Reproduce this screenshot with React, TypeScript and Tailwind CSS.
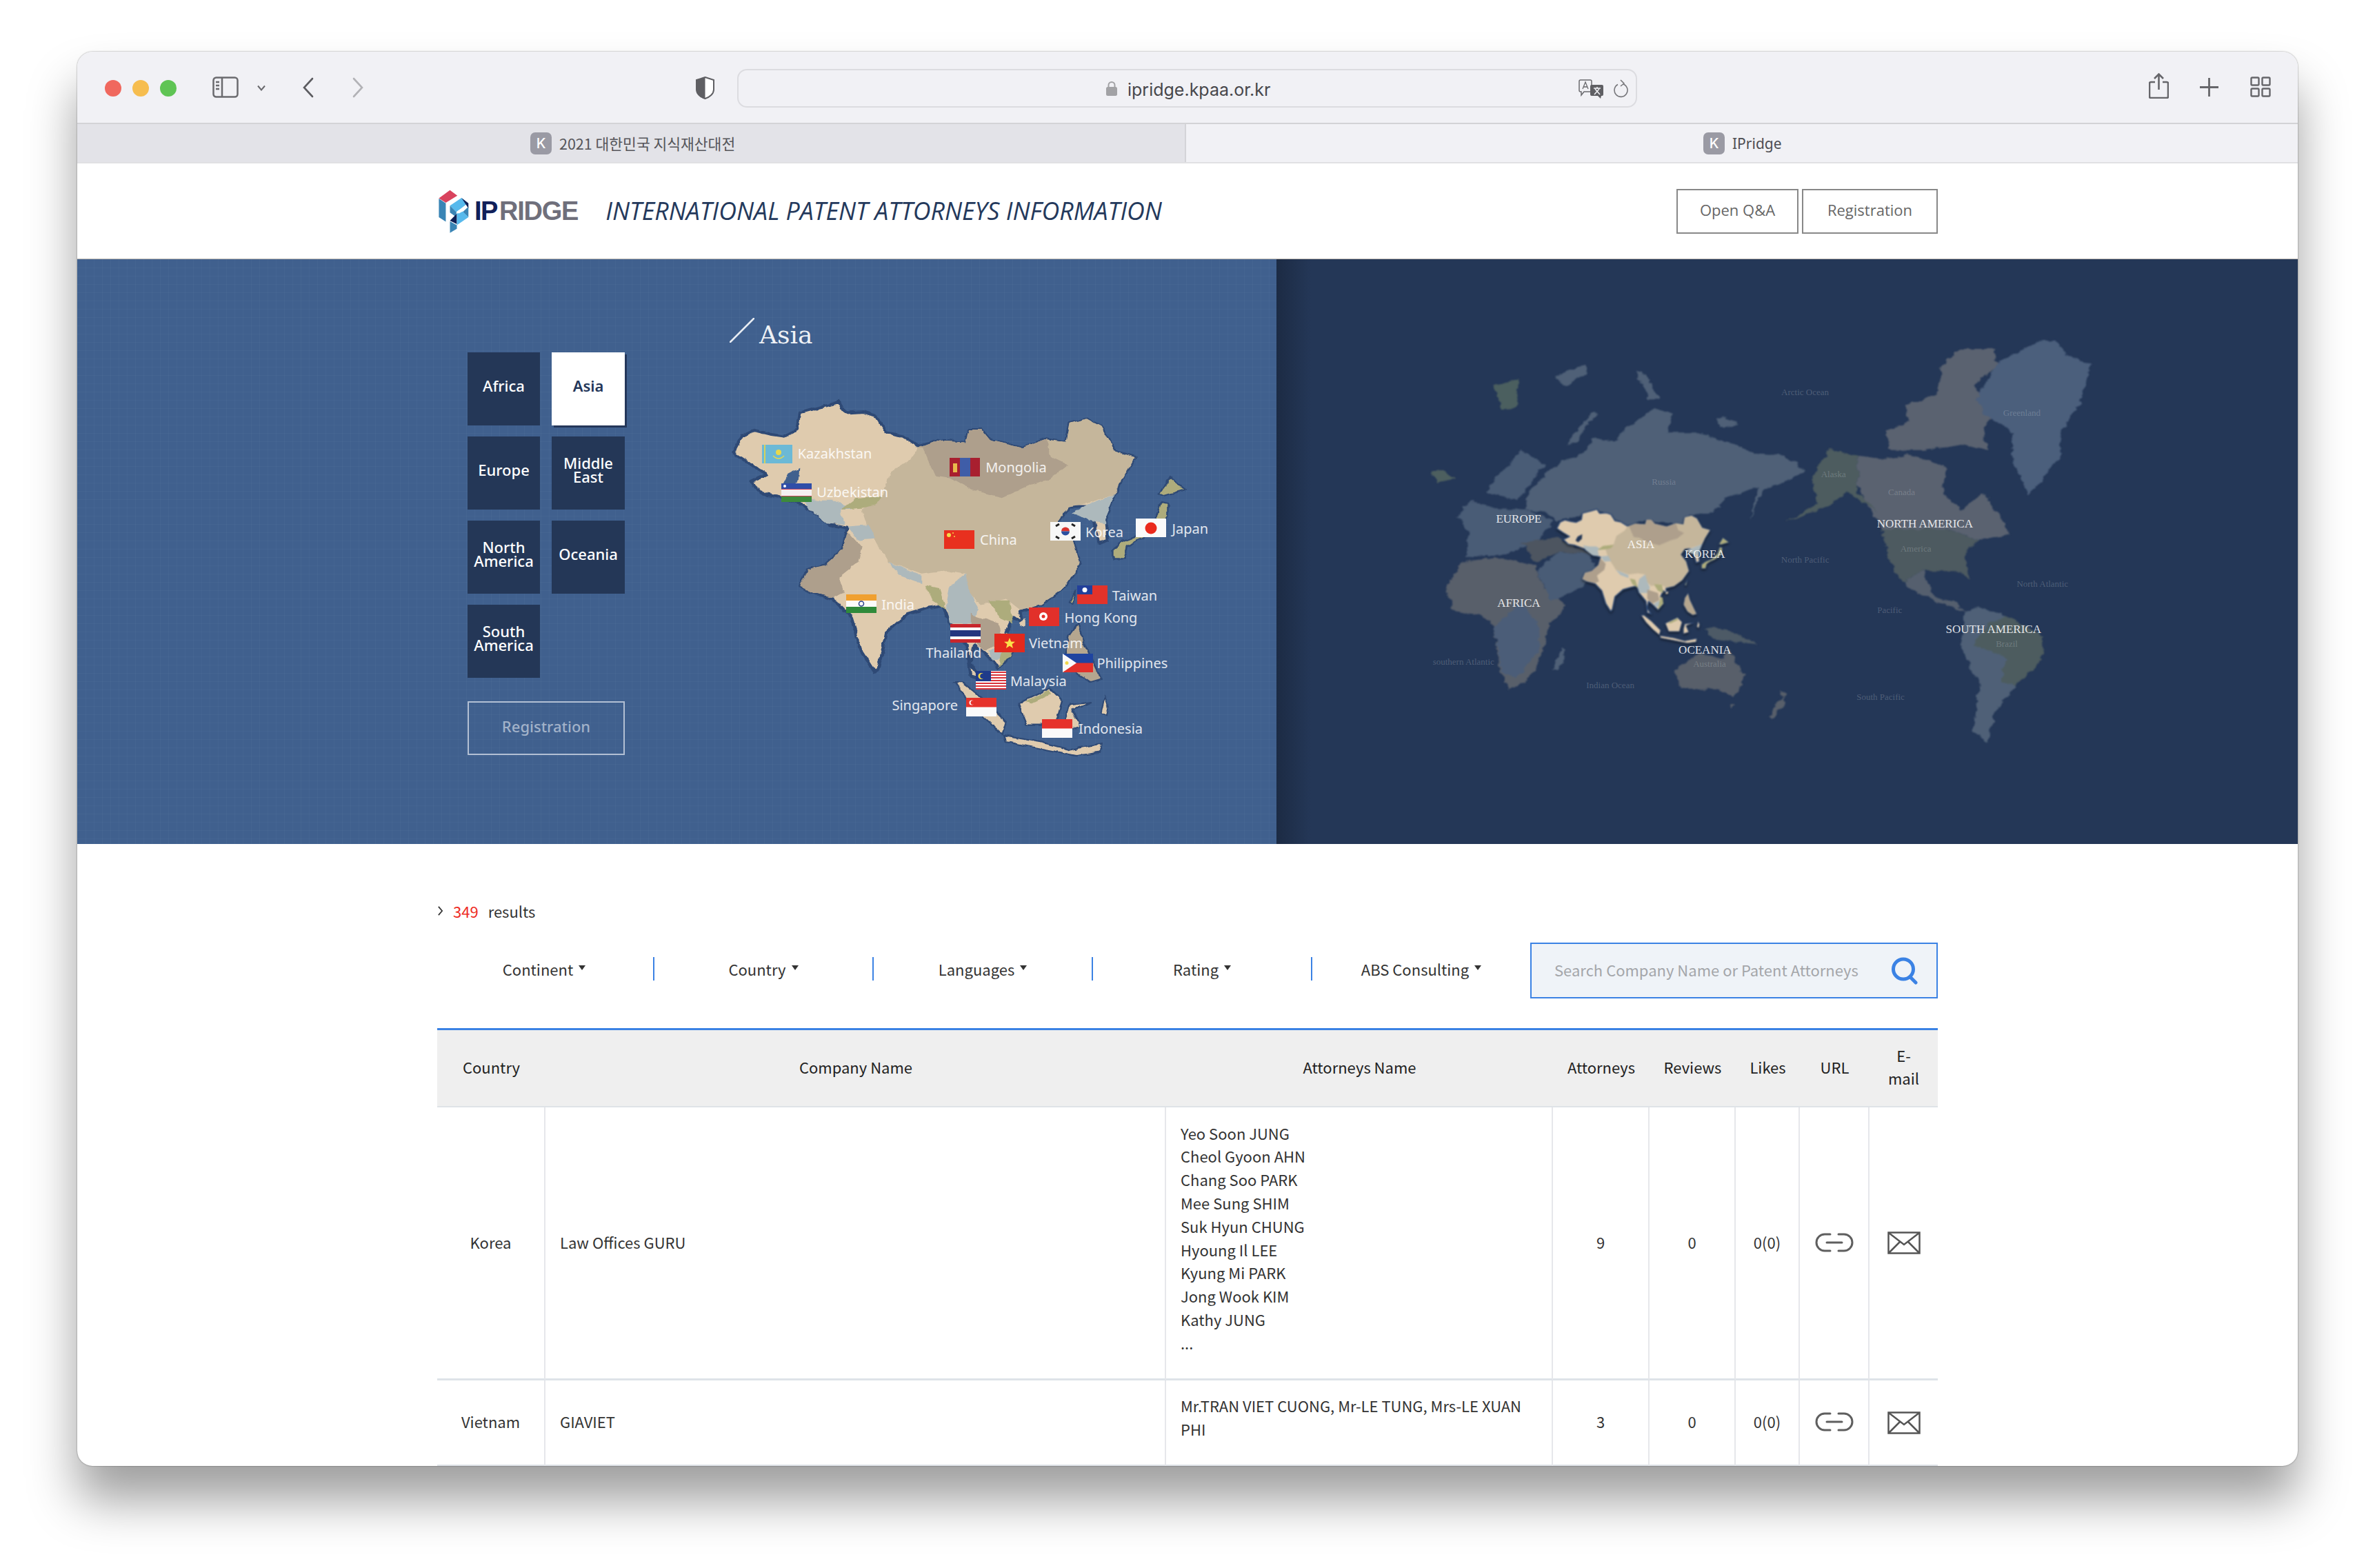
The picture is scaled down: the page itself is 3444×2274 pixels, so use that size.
import React from "react";

const kr = "font-['Noto_Sans_CJK_KR',sans-serif]";

const regions = [
  { name: "Africa" },
  { name: "Asia", active: true },
  { name: "Europe" },
  { name: "Middle East" },
  { name: "North America" },
  { name: "Oceania" },
  { name: "South America" },
];

const names = [
  "Yeo Soon JUNG",
  "Cheol Gyoon AHN",
  "Chang Soo PARK",
  "Mee Sung SHIM",
  "Suk Hyun CHUNG",
  "Hyoung Il LEE",
  "Kyung Mi PARK",
  "Jong Wook KIM",
  "Kathy JUNG",
  "...",
];

// positions below are in the coordinate space of the map svg (1568 x 1568 stretched to 800 x 700)
const pins = [
  { flag: "kz", fx: 166, fy: 479, label: "Kazakhstan", lx: 268, ly: 508 },
  { flag: "uz", fx: 222, fy: 605, label: "Uzbekistan", lx: 322, ly: 634 },
  { flag: "mn", fx: 699, fy: 521, label: "Mongolia", lx: 802, ly: 553 },
  { flag: "cn", fx: 685, fy: 757, label: "China", lx: 786, ly: 789 },
  { flag: "kr", fx: 986, fy: 731, label: "Korea", lx: 1086, ly: 763 },
  { flag: "jp", fx: 1229, fy: 719, label: "Japan", lx: 1332, ly: 752 },
  { flag: "tw", fx: 1062, fy: 937, label: "Taiwan", lx: 1162, ly: 969 },
  { flag: "hk", fx: 926, fy: 1008, label: "Hong Kong", lx: 1026, ly: 1041 },
  { flag: "in", fx: 405, fy: 966, label: "India", lx: 506, ly: 998 },
  { flag: "th", fx: 702, fy: 1061, label: "Thailand", lx: 632, ly: 1155 },
  { flag: "vn", fx: 828, fy: 1092, label: "Vietnam", lx: 925, ly: 1124 },
  { flag: "ph", fx: 1022, fy: 1158, label: "Philippines", lx: 1118, ly: 1189 },
  { flag: "my", fx: 775, fy: 1214, label: "Malaysia", lx: 872, ly: 1247 },
  { flag: "sg", fx: 746, fy: 1301, label: "Singapore", lx: 536, ly: 1327 },
  { flag: "id", fx: 962, fy: 1370, label: "Indonesia", lx: 1066, ly: 1403 },
];

const worldLabels = [
  { t: "EUROPE", x: 245, y: 715, big: true },
  { t: "ASIA", x: 512, y: 805, big: true },
  { t: "KOREA", x: 652, y: 840, big: true },
  { t: "AFRICA", x: 245, y: 1015, big: true },
  { t: "NORTH AMERICA", x: 1133, y: 732, big: true },
  { t: "SOUTH AMERICA", x: 1283, y: 1107, big: true },
  { t: "OCEANIA", x: 652, y: 1180, big: true },
  { t: "Arctic Ocean", x: 871, y: 264 },
  { t: "North Pacific", x: 871, y: 861 },
  { t: "North Atlantic", x: 1390, y: 945 },
  { t: "Pacific", x: 1056, y: 1039 },
  { t: "southern Atlantic", x: 124, y: 1222 },
  { t: "Indian Ocean", x: 445, y: 1307 },
  { t: "South Pacific", x: 1036, y: 1348 },
  { t: "Greenland", x: 1345, y: 338 },
  { t: "Russia", x: 562, y: 582 },
  { t: "Canada", x: 1082, y: 620 },
  { t: "Alaska", x: 933, y: 555 },
  { t: "America", x: 1113, y: 820 },
  { t: "Brazil", x: 1312, y: 1160 },
  { t: "Australia", x: 662, y: 1230 },
];

function Flag({ kind }: { kind: string }) {
  const bands = (a: string, b: string, c: string) => (
    <>
      <rect width="44" height="9" fill={a} />
      <rect y="9" width="44" height="9" fill={b} />
      <rect y="18" width="44" height="9" fill={c} />
    </>
  );
  return (
    <svg viewBox="0 0 44 27" className="w-[44px] h-[27px] block">
      {kind === "kz" && (
        <>
          <rect width="44" height="27" fill="#6cb9d6" />
          <rect x="3" width="2" height="27" fill="#d8d25a" />
          <circle cx="24" cy="11" r="4" fill="#e8d84c" />
          <path d="M16 16 Q24 24 32 16" stroke="#e8d84c" strokeWidth="1.5" fill="none" />
        </>
      )}
      {kind === "uz" && (
        <>
          {bands("#2f4ea8", "#f4f0f0", "#3d8a3c")}
          <rect y="8" width="44" height="1" fill="#c9425a" />
          <rect y="18" width="44" height="1" fill="#c9425a" />
          <circle cx="5" cy="4" r="2" fill="#fff" />
        </>
      )}
      {kind === "mn" && (
        <>
          <rect width="44" height="27" fill="#a81f2f" />
          <rect x="15" width="15" height="27" fill="#3f5da8" />
          <rect x="5" y="8" width="6" height="13" fill="#e8b94c" />
        </>
      )}
      {kind === "cn" && (
        <>
          <rect width="44" height="27" fill="#e8301f" />
          <circle cx="7" cy="7" r="3" fill="#f5d94a" />
          <circle cx="13" cy="4" r="1" fill="#f5d94a" />
          <circle cx="15" cy="9" r="1" fill="#f5d94a" />
        </>
      )}
      {kind === "kr" && (
        <>
          <rect width="44" height="27" fill="#f7f7f7" />
          <path d="M16 13.5 a6 6 0 0 1 12 0z" fill="#d8332e" />
          <path d="M16 13.5 a6 6 0 0 0 12 0z" fill="#2a4fa0" />
          <path d="M8 6 L13 3 M31 3 L36 6 M8 21 L13 24 M31 24 L36 21" stroke="#222" strokeWidth="3" />
        </>
      )}
      {kind === "jp" && (
        <>
          <rect width="44" height="27" fill="#fafafa" />
          <circle cx="22" cy="14" r="8.5" fill="#ea2a1d" />
        </>
      )}
      {kind === "tw" && (
        <>
          <rect width="44" height="27" fill="#e2332a" />
          <rect width="22" height="13" fill="#22409a" />
          <circle cx="11" cy="6.5" r="3.5" fill="#fff" />
        </>
      )}
      {kind === "hk" && (
        <>
          <rect width="44" height="27" fill="#e2302a" />
          <circle cx="21" cy="13" r="6" fill="#fff" />
          <circle cx="21" cy="13" r="2.5" fill="#e2302a" />
        </>
      )}
      {kind === "in" && (
        <>
          {bands("#f0a030", "#fbfbfb", "#2f8a3a")}
          <circle cx="22" cy="13.5" r="3.5" fill="none" stroke="#2a3f88" strokeWidth="1.5" />
        </>
      )}
      {kind === "th" && (
        <>
          <rect width="44" height="27" fill="#c8262c" />
          <rect y="5" width="44" height="17" fill="#fafafa" />
          <rect y="9" width="44" height="9" fill="#24357f" />
        </>
      )}
      {kind === "vn" && (
        <>
          <rect width="44" height="27" fill="#e3291d" />
          <polygon points="22,6 24.2,11.5 30,11.8 25.5,15.3 27,21 22,17.8 17,21 18.5,15.3 14,11.8 19.8,11.5" fill="#fbe14a" />
        </>
      )}
      {kind === "ph" && (
        <>
          <rect width="44" height="14" fill="#1f44a0" />
          <rect y="13.5" width="44" height="13.5" fill="#e2302a" />
          <polygon points="0,0 20,13.5 0,27" fill="#fafafa" />
          <circle cx="6" cy="13.5" r="2.5" fill="#f2d84a" />
        </>
      )}
      {kind === "my" && (
        <>
          <rect width="44" height="27" fill="#fff" />
          <path d="M0 2H44M0 6H44M0 10H44M0 14H44M0 18H44M0 22H44M0 26H44" stroke="#d9333a" strokeWidth="2" />
          <rect width="22" height="15" fill="#1f3b8a" />
          <circle cx="8" cy="7.5" r="4.5" fill="#f2d84a" />
          <circle cx="10" cy="7.5" r="3.8" fill="#1f3b8a" />
        </>
      )}
      {kind === "sg" && (
        <>
          <rect width="44" height="27" fill="#fafafa" />
          <rect width="44" height="13.5" fill="#e6322b" />
          <circle cx="8" cy="7" r="3.5" fill="#fff" />
          <circle cx="9.5" cy="7" r="3" fill="#e6322b" />
        </>
      )}
      {kind === "id" && (
        <>
          <rect width="44" height="27" fill="#fafafa" />
          <rect width="44" height="13.5" fill="#e6322b" />
        </>
      )}
    </svg>
  );
}

// coastline wobble, the hand polygons are too straight without it
function Rough({ id, freq, scale }: { id: string; freq: string; scale: string }) {
  return (
    <filter id={id} x="-5%" y="-5%" width="110%" height="110%">
      <feTurbulence type="fractalNoise" baseFrequency={freq} numOctaves="3" seed="4" result="n" />
      <feDisplacementMap in="SourceGraphic" in2="n" scale={scale} xChannelSelector="R" yChannelSelector="G" />
    </filter>
  );
}

// drawn once, used for the big map and again inside the world map
function AsiaShapes({ water }: { water: string }) {
  const outline =
    "85,505 110,450 145,432 190,445 230,452 268,430 275,375 340,355 385,340 405,375 455,372 490,385 520,440 565,450 612,485 670,465 745,470 755,430 790,430 815,465 905,490 975,460 1030,470 1040,410 1090,395 1130,420 1170,500 1228,520 1190,590 1170,640 1145,710 1150,790 1125,800 1110,730 1090,680 1040,680 1010,730 1050,790 1070,870 1020,950 960,1000 900,1020 905,1060 880,1040 860,1090 880,1150 840,1205 815,1175 790,1150 770,1130 760,1190 790,1240 760,1230 750,1130 700,1060 680,1000 640,1010 580,1030 520,1090 500,1200 488,1218 450,1150 420,1040 370,980 310,960 275,940 295,885 345,870 395,820 410,750 360,740 290,680 220,650 170,640 135,600 180,575 130,540";
  return (
    <>
      <polygon points={outline} fill="#dfcbae" stroke="#2f4a75" strokeWidth="9" strokeLinejoin="round" />
      <polygon points="612,490 590,525 530,570 510,640 450,690 470,760 510,830 525,860 620,900 690,890 745,900 755,960 790,1000 860,980 900,1015 960,1000 1020,950 1070,870 1050,790 1010,730 1040,680 1090,670 1170,640 1190,590 1228,520 1170,500 1130,420 1090,395 1040,410 1030,470 975,460 905,490 815,465 790,430 755,430 745,470 670,465" fill="#c5b69b" />
      <polygon points="612,490 670,465 745,470 755,430 790,430 815,465 905,490 975,460 990,520 1035,545 985,590 930,610 850,650 760,625 700,585 660,580 625,490" fill="#ae9f8c" />
      <polygon points="410,760 450,810 440,860 385,910 400,960 370,975 310,960 275,940 295,885 345,870 395,820" fill="#ae9f8c" />
      <polygon points="280,650 330,660 380,660 420,690 390,690 400,740 350,735 300,690" fill="#adb9bc" />
      <polygon points="410,745 470,740 490,785 440,790" fill="#adb9bc" />
      <polygon points="390,690 430,655 510,645 490,675 450,685" fill="#adac7c" />
      <polygon points="525,860 620,905 620,930 560,905" fill="#adb9bc" />
      <polygon points="630,935 670,945 690,1015 650,985" fill="#adac7c" />
      <polygon points="690,1000 700,940 745,900 760,960 780,1010 770,1060 700,1060" fill="#adb9bc" />
      <polygon points="810,985 870,985 880,1060 840,1040" fill="#adac7c" />
      <polygon points="760,1030 840,1060 850,1120 800,1150 760,1110" fill="#ae9f8c" />
      <polygon points="810,1150 850,1125 860,1170 820,1180" fill="#adb9bc" />
      <polygon points="840,1205 880,1150 875,1100 860,1090 845,1170" fill="#adac7c" />
      <polygon points="1045,700 1100,670 1170,640 1145,710 1145,735 1110,730" fill="#adb9bc" />
      <polygon points="240,575 275,555 272,595 245,625 225,610" fill={water} />
      <polygon points="1295,640 1325,585 1370,625 1310,645" fill="#aeac7b" stroke="#2f4a75" strokeWidth="5" />
      <polygon points="1300,665 1320,670 1320,710 1300,745 1260,775 1230,790 1205,810 1195,850 1165,850 1165,815 1195,790 1240,770 1285,720" fill="#aeac7b" stroke="#2f4a75" strokeWidth="5" />
      <polygon points="1040,990 1060,950 1050,995" fill="#aeac7b" stroke="#2f4a75" strokeWidth="4" />
      <polygon points="1040,1100 1065,1060 1080,1120 1130,1240 1100,1250 1060,1220 1030,1160" fill="#b5a68f" stroke="#2f4a75" strokeWidth="5" />
      <polygon points="715,1250 735,1250 790,1300 860,1380 850,1420 800,1370 750,1310" fill="#dfcbae" stroke="#2f4a75" strokeWidth="5" />
      <polygon points="895,1320 985,1270 1020,1310 1000,1390 920,1390" fill="#dfcbae" stroke="#2f4a75" strokeWidth="5" />
      <polygon points="915,1315 985,1275 990,1290 935,1320" fill="#adac7c" />
      <polygon points="1030,1370 1040,1325 1105,1315 1050,1340 1070,1395 1030,1410" fill="#dfcbae" stroke="#2f4a75" strokeWidth="5" />
      <polygon points="1130,1350 1140,1300 1150,1330 1145,1360" fill="#dfcbae" stroke="#2f4a75" strokeWidth="4" />
      <polygon points="855,1425 960,1445 1040,1470 1130,1450 1125,1480 1060,1490 950,1465 860,1445" fill="#dfcbae" stroke="#2f4a75" strokeWidth="5" />
      <polygon points="895,1060 915,1045 915,1065 900,1068" fill="#dfcbae" />
    </>
  );
}

function AsiaMap() {
  return (
    <div className="absolute left-[908px] top-[55px] w-[800px] h-[700px]">
      <svg viewBox="0 0 1568 1568" preserveAspectRatio="none" className="absolute inset-0 w-full h-full">
        <defs>
          <Rough id="roughAsia" freq="0.035" scale="13" />
        </defs>
        <g filter="url(#roughAsia)">
          <AsiaShapes water="#40608e" />
        </g>
      </svg>
      {pins.map((p) => (
        <React.Fragment key={p.flag}>
          <div className="absolute" style={{ left: p.fx / 1.96, top: p.fy / 2.24 }}>
            <Flag kind={p.flag} />
          </div>
          <span
            className="absolute font-['Noto_Sans',sans-serif] text-[20px] leading-[28px] text-white/85 whitespace-nowrap"
            style={{ left: p.lx / 1.96, top: p.ly / 2.24 - 14 }}
          >
            {p.label}
          </span>
        </React.Fragment>
      ))}
    </div>
  );
}

function WorldMap() {
  return (
    <div className="absolute left-[189px] top-[85px] w-[1040px] h-[640px]">
      <svg viewBox="0 0 1568 1568" preserveAspectRatio="none" className="absolute inset-0 w-full h-full blur-[0.8px]">
        <defs>
          <Rough id="roughWorld" freq="0.045" scale="18" />
        </defs>
        <g filter="url(#roughWorld)">
          <polygon points="260,640 300,560 340,510 385,480 410,430 450,440 470,410 540,320 580,340 570,410 640,410 700,440 760,480 830,490 870,540 840,575 780,610 750,720 770,600 700,640 670,690 620,700 600,730 520,720 480,740 440,700 410,680 385,700 330,720 300,690 260,680" fill="#4f6177" />
          <polygon points="350,450 410,330 415,340 370,440" fill="#4f6177" />
          <polygon points="500,190 525,200 550,290 530,290" fill="#4f6177" />
          <polygon points="320,210 390,165 395,200 350,240" fill="#4f6177" />
          <polygon points="672,360 700,350 725,385 690,390" fill="#4f6177" />
          <polygon points="170,620 250,465 300,520 270,590 240,650 215,640" fill="#4a5c76" />
          <polygon points="110,710 140,650 200,680 260,680 320,720 290,790 220,840 130,850 135,760" fill="#4a5c76" />
          <polygon points="55,550 75,540 105,570 70,585" fill="#4d5f5f" />
          <polygon points="190,240 245,215 240,310 210,330" fill="#4c5f5e" />
          <polygon points="85,960 120,870 190,850 280,880 300,960 350,1020 310,1090 300,1180 270,1280 225,1320 205,1260 190,1100 165,1060 100,1040" fill="#585f6b" />
          <polygon points="190,1100 250,1010 290,1100 290,1180 240,1280 210,1260" fill="#4b5d78" />
          <polygon points="320,1250 340,1170 345,1200 330,1255" fill="#4f6177" />
          <polygon points="285,900 330,830 400,840 415,900 380,960 315,1010" fill="#4a5c76" />
          <polygon points="250,800 330,780 400,840 330,830 285,870" fill="#4d5560" />
          <polygon points="985,490 1040,500 1100,485 1180,530 1170,620 1215,680 1260,620 1310,740 1320,770 1250,790 1180,750 1040,750 1000,650 985,590" fill="#5a6270" />
          <polygon points="1045,400 1100,370 1090,310 1160,270 1170,170 1210,110 1285,110 1290,170 1240,240 1290,340 1260,390 1270,470 1220,450 1130,470 1060,470" fill="#5a6270" />
          <polygon points="885,570 925,465 985,490 985,620 1030,690 960,620 920,670 830,725 900,660 890,600" fill="#4d5c5f" />
          <polygon points="1245,290 1290,160 1380,85 1420,80 1440,130 1495,170 1470,310 1430,410 1430,490 1360,630 1325,510 1320,400 1260,340" fill="#4b5f7c" />
          <polygon points="1040,750 1180,750 1250,790 1220,830 1230,930 1205,900 1130,900 1085,940 1050,850" fill="#4d5a60" />
          <polygon points="1085,940 1130,900 1150,990 1200,1010 1225,1045 1160,1010 1120,980" fill="#545f6e" />
          <polygon points="1215,1050 1250,1025 1310,1060 1395,1130 1380,1220 1330,1310 1285,1400 1270,1510 1240,1470 1250,1300 1215,1180" fill="#4f6177" />
          <polygon points="1270,1090 1310,1060 1395,1130 1385,1220 1330,1310 1300,1290 1310,1210 1240,1160" fill="#4d5c5f" />
          <polygon points="585,1250 640,1190 690,1210 705,1180 738,1270 720,1350 680,1320 600,1320" fill="#585f6b" />
          <polygon points="703,1370 718,1370 712,1392" fill="#585f6b" />
          <polygon points="790,1420 815,1360 830,1340 815,1320 828,1370 800,1425" fill="#585f6b" />
          <polygon points="650,1100 700,1110 770,1160 720,1150 670,1140" fill="#4d5a66" />
        </g>
        <g transform="translate(303 539) scale(0.293 0.414)" className="drop-shadow-[0_12px_8px_rgba(0,0,0,0.5)]">
          <AsiaShapes water="#243757" />
        </g>
      </svg>
      {worldLabels.map((l) => (
        <span
          key={l.t}
          className={
            l.big
              ? "absolute -translate-x-1/2 -translate-y-1/2 font-['Liberation_Serif',serif] text-[17px] text-white/85 whitespace-nowrap"
              : "absolute -translate-x-1/2 -translate-y-1/2 font-['Liberation_Serif',serif] text-[13px] text-white/20 whitespace-nowrap"
          }
          style={{ left: l.x / 1.508, top: l.y / 2.45 }}
        >
          {l.t}
        </span>
      ))}
    </div>
  );
}

function Logo() {
  return (
    <svg viewBox="25 25 140 200" className="w-[47px] h-[67px]">
      <polygon points="32,68 80,33 112,57 62,88" fill="#d9435e" />
      <polygon points="32,70 62,90 62,170 32,150" fill="#3a85b5" />
      <polygon points="80,100 130,67 157,90 108,128" fill="#57b9ec" />
      <polygon points="130,67 160,90 160,112" fill="#0e1f55" />
      <polygon points="80,100 108,128 108,150 80,130" fill="#3a85b5" />
      <polygon points="160,105 160,150 135,128" fill="#3a85b5" />
      <polygon points="80,165 110,135 110,180" fill="#0e1f55" />
      <polygon points="110,135 135,125 160,150 110,185" fill="#57b9ec" />
      <polygon points="110,125 135,110 135,125 118,135" fill="#ffffff" />
      <polygon points="80,168 110,185 110,200 80,218" fill="#3a85b5" />
    </svg>
  );
}

function LinkIcon() {
  return (
    <svg viewBox="0 0 56 30" className="w-[56px] h-[30px] mx-auto" fill="none" stroke="#5f5f5f" strokeWidth="3" strokeLinecap="round">
      <path d="M22 3H14a12 12 0 0 0 0 24h8" />
      <path d="M34 3h8a12 12 0 0 1 0 24h-8" />
      <path d="M17 15h22" />
    </svg>
  );
}

function MailIcon() {
  return (
    <svg viewBox="0 0 48 33" className="w-[48px] h-[33px] mx-auto" fill="none" stroke="#555" strokeWidth="2.5">
      <rect x="1.5" y="1.5" width="45" height="30" />
      <path d="M2 2l22 17L46 2M2 31l16-16M46 31L30 15" />
    </svg>
  );
}

function Toolbar() {
  return (
    <div className="relative h-[105px] bg-[#f1f1f5] border-b-2 border-[#d3d3d6] shrink-0">
      <div className="absolute left-[40px] top-[41px] flex gap-[16px]">
        <span className="w-[24px] h-[24px] rounded-full bg-[#f0685e]" />
        <span className="w-[24px] h-[24px] rounded-full bg-[#f6bd4f]" />
        <span className="w-[24px] h-[24px] rounded-full bg-[#5fc454]" />
      </div>
      <svg viewBox="0 0 38 31" className="absolute left-[196px] top-[36px] w-[38px] h-[31px]" fill="none" stroke="#6a6a6e" strokeWidth="2.5">
        <rect x="1.5" y="1.5" width="35" height="28" rx="4" />
        <path d="M14 2v27" />
        <path d="M5 8h5M5 13h5M5 18h5" />
      </svg>
      <svg viewBox="0 0 12 8" className="absolute left-[261px] top-[48px] w-[12px] h-[9px]" fill="none" stroke="#6a6a6e" strokeWidth="2">
        <path d="M1 1l5 6 5-6" />
      </svg>
      <svg viewBox="0 0 16 30" className="absolute left-[327px] top-[37px] w-[16px] h-[30px]" fill="none" stroke="#5c5c60" strokeWidth="2.6" strokeLinecap="round">
        <path d="M14 2L2 15l12 13" />
      </svg>
      <svg viewBox="0 0 16 30" className="absolute left-[399px] top-[37px] w-[16px] h-[30px]" fill="none" stroke="#b2b2b6" strokeWidth="2.6" strokeLinecap="round">
        <path d="M2 2l12 13L2 28" />
      </svg>
      <svg viewBox="0 0 27 33" className="absolute left-[897px] top-[36px] w-[27px] h-[33px]">
        <path d="M13.5 1L26 5v14c0 6-6 11-12.500 13C7 30 1 25 1 19V5z" fill="#fff" stroke="#5f5f63" strokeWidth="2" />
        <path d="M13.500 1L1 5v14c0 6 6 11 12.500 13z" fill="#5f5f63" />
      </svg>
      <div className="absolute left-[957px] top-[25px] w-[1305px] h-[56px] rounded-[14px] border-2 border-[#dcdce0] flex items-center justify-center">
        <svg viewBox="0 0 16 21" className="absolute left-[533px] top-[16px] w-[16px] h-[21px]">
          <rect y="8" width="16" height="13" rx="2.500" fill="#a2a2a5" />
          <path d="M3.500 9V5.500a4.500 4.500 0 0 1 9 0V9" fill="none" stroke="#a2a2a5" strokeWidth="2" />
        </svg>
        <span className="absolute left-[564px] top-[11px] font-['Inter',sans-serif] text-[25px] leading-[34px] text-[#47474b] whitespace-nowrap">
          ipridge.kpaa.or.kr
        </span>
        <svg viewBox="0 0 37 28" className="absolute left-[1218px] top-[13px] w-[37px] h-[28px]">
          <path d="M3 1h14a2 2 0 0 1 2 2v13a2 2 0 0 1-2 2H8l-4 5v-5H3a2 2 0 0 1-2-2V3a2 2 0 0 1 2-2z" fill="#f1f1f5" stroke="#6a6a6e" strokeWidth="1.5" />
          <path d="M19 8h15a2 2 0 0 1 2 2v12a2 2 0 0 1-2 2h-1l-1 4-4-4h-9a2 2 0 0 1-2-2V10a2 2 0 0 1 2-2z" fill="#5f5f63" />
          <path d="M22 13h10M27 11v3M23 22l7-8M31 22l-7-8" stroke="#f1f1f5" strokeWidth="1.5" />
          <path d="M6 14l4-10 4 10M7.500 11h5" fill="none" stroke="#6a6a6e" strokeWidth="1.300" />
        </svg>
        <svg viewBox="0 0 22 28" className="absolute left-[1268px] top-[13px] w-[22px] h-[28px]" fill="none" stroke="#77777b" strokeWidth="1.600">
          <path d="M15 7a9.500 9.500 0 1 1-8 .5" />
          <path d="M11 1l5 5-5 4" />
        </svg>
      </div>
      <svg viewBox="0 0 29 37" className="absolute left-[3004px] top-[31px] w-[29px] h-[37px]" fill="none" stroke="#66666a" strokeWidth="2.600">
        <path d="M9 13H3a2 2 0 0 0-2 2v19a2 2 0 0 0 2 2h23a2 2 0 0 0 2-2V15a2 2 0 0 0-2-2h-6" />
        <path d="M14.500 24V2M8 8l6.500-6.500L21 8" />
      </svg>
      <svg viewBox="0 0 29 29" className="absolute left-[3077px] top-[37px] w-[29px] h-[29px]" fill="none" stroke="#66666a" strokeWidth="2.800">
        <path d="M14.500 1v27M1 14.500h27" />
      </svg>
      <svg viewBox="0 0 30 30" className="absolute left-[3151px] top-[36px] w-[30px] h-[30px]" fill="none" stroke="#66666a" strokeWidth="2.400">
        <rect x="1.500" y="1.500" width="11" height="11" rx="1.500" />
        <rect x="17.500" y="1.500" width="11" height="11" rx="1.500" />
        <rect x="1.500" y="17.500" width="11" height="11" rx="1.500" />
        <rect x="17.500" y="17.500" width="11" height="11" rx="1.500" />
      </svg>
    </div>
  );
}

function Favicon() {
  return (
    <span className="w-[31px] h-[32px] rounded-[7px] bg-[#9a9aa4] flex items-center justify-center text-white font-['Inter',sans-serif] text-[20px] font-medium">
      K
    </span>
  );
}

function Tabs() {
  return (
    <div className="flex h-[57px] border-b-2 border-[#e0e0e3] shrink-0">
      <div className="w-[1608px] bg-[#e3e3e8] border-r-2 border-[#d4d4d8] flex items-center gap-[11px] pl-[657px]">
        <Favicon />
        <span className={`${kr} text-[21.5px] pt-[2px] text-[#55555a] whitespace-nowrap`}>2021 대한민국 지식재산대전</span>
      </div>
      <div className="flex-1 bg-[#f1f1f5] flex items-center gap-[11px] pl-[750px]">
        <Favicon />
        <span className="font-['Noto_Sans',sans-serif] text-[21px] pt-[3px] text-[#4d4d52]">IPridge</span>
      </div>
    </div>
  );
}

function Header() {
  return (
    <div className="h-[138px] bg-white flex items-center pl-[522px] pr-[522px] shrink-0">
      <Logo />
      <span className="ml-[7px] font-['Liberation_Sans',sans-serif] font-bold text-[38px] tracking-[-1.5px] text-[#10205a]">IP</span>
      <span className="ml-[3px] font-['Liberation_Sans',sans-serif] font-bold text-[38px] tracking-[-1.2px] text-[#6f6f7b]">RIDGE</span>
      <span className="ml-[40px] font-['Open_Sans',sans-serif] font-medium italic text-[35.7px] text-[#24395c] whitespace-nowrap">
        INTERNATIONAL PATENT ATTORNEYS INFORMATION
      </span>
      <div className="ml-auto flex gap-[5px] font-['Open_Sans',sans-serif] text-[22px] text-[#666]">
        <button className="w-[177px] h-[65px] pb-[3px] border-2 border-[#888]">Open Q&amp;A</button>
        <button className="w-[197px] h-[65px] pb-[3px] border-2 border-[#888]">Registration</button>
      </div>
    </div>
  );
}

function Hero() {
  return (
    <div className="relative flex h-[849px] border-t border-[#b9b4ae] shrink-0">
      <div className="relative w-[1739px] bg-[#40608e] bg-[linear-gradient(rgba(255,255,255,0.025)_1px,transparent_1px),linear-gradient(90deg,rgba(255,255,255,0.025)_1px,transparent_1px)] bg-[size:12px_12px] pl-[566px] pt-[135px]">
        <div className="grid grid-cols-[105px_106px] auto-rows-[106px] gap-x-[17px] gap-y-[16px] w-[228px] font-['Noto_Sans',sans-serif] text-[22px] leading-[20px] font-medium">
          {regions.map((r) => (
            <button
              key={r.name}
              className={
                r.active
                  ? "flex items-center justify-center pb-[10px] bg-white text-[#24375a] font-semibold shadow-[3px_3px_0_#24375a]"
                  : "flex items-center justify-center pb-[10px] bg-[#243757] text-white"
              }
            >
              <span className="block w-min text-center">{r.name}</span>
            </button>
          ))}
        </div>
        <button className="mt-[34px] w-[228px] h-[78px] pb-[5px] border-2 border-[#b3c0d4] font-['Noto_Sans',sans-serif] font-medium text-[22px] text-[#a2b2c9]">
          Registration
        </button>
        <svg viewBox="0 0 36 36" className="absolute left-[946px] top-[85px] w-[36px] h-[36px]" fill="none" stroke="#e8ecf2" strokeWidth="2.500" strokeLinecap="round">
          <path d="M1 35L35 1" />
        </svg>
        <span className="absolute left-[989px] top-[88px] font-['DejaVu_Serif',serif] text-[36px] leading-[44px] text-[#eef1f5]">Asia</span>
        <AsiaMap />
      </div>
      <div className="relative flex-1 bg-[#243757] overflow-hidden">
        <div className="absolute inset-y-0 left-0 w-[50px] bg-gradient-to-r from-[#1c2b44] to-transparent" />
        <WorldMap />
      </div>
    </div>
  );
}

function Caret() {
  return <span className="ml-[8px] mb-[4px] inline-block w-0 h-0 border-x-[5px] border-x-transparent border-t-[7px] border-t-[#333]" />;
}

function Filters() {
  const items = ["Continent", "Country", "Languages", "Rating", "ABS Consulting"];
  return (
    <div className="flex items-center mt-[33px] h-[81px]">
      <div className="flex -ml-[3px] mb-[5px]">
        {items.map((item, i) => (
          <div key={item} className={i < 4 ? "w-[318px] h-[34px] flex items-center justify-center border-r-2 border-[#3b82e4]" : "w-[316px] h-[34px] flex items-center justify-center"}>
            <span className="text-[#333]">{item}</span>
            <Caret />
          </div>
        ))}
      </div>
      <div className="ml-auto w-[592px] h-[81px] bg-[#eff3f8] border-2 border-[#3b82e4] flex items-center justify-between pl-[33px] pr-[26px]">
        <span className="pb-[3px] text-[#a4a6aa]">Search Company Name or Patent Attorneys</span>
        <svg viewBox="0 0 40 40" className="w-[40px] h-[40px]" fill="none" stroke="#3b82e4" strokeWidth="5" strokeLinecap="round">
          <ellipse cx="18" cy="17.500" rx="14.500" ry="14.500" />
          <path d="M28 29l8 8" />
        </svg>
      </div>
    </div>
  );
}

const th = "font-normal text-[#222] text-center px-[4px] pb-[4px] leading-[33px]";
const td = "border-r-2 border-b-[3px] border-r-[#e6e7eb] border-b-[#dee3e8] text-center text-[#333] align-middle pb-[2px]";
const tdLeft = "border-r-2 border-b-[3px] border-r-[#e6e7eb] border-b-[#dee3e8] text-left text-[#333] align-middle pl-[21px] pr-[30px] pb-[2px]";
const tdLast = "border-b-[3px] border-b-[#dee3e8] text-center align-middle";

function ResultRow({ country, company, attorneys, count, h }: { country: string; company: string; attorneys: React.ReactNode; count: string; h: string }) {
  return (
    <tr className={h}>
      <td className={td}>{country}</td>
      <td className={tdLeft}>{company}</td>
      <td className={tdLeft}>
        <div className="pb-[12px]">{attorneys}</div>
      </td>
      <td className={td}>{count}</td>
      <td className={td}>0</td>
      <td className={td}>0(0)</td>
      <td className={td}>
        <LinkIcon />
      </td>
      <td className={tdLast}>
        <MailIcon />
      </td>
    </tr>
  );
}

function Results() {
  return (
    <div className={`px-[522px] pt-[84px] ${kr} text-[22px]`}>
      <div className="flex items-center h-[26px] text-[#333]">
        <svg viewBox="0 0 10 16" className="w-[9px] h-[14px] mr-[14px]" fill="none" stroke="#333" strokeWidth="2">
          <path d="M2 1l6 7-6 7" />
        </svg>
        <span className="text-[#ee2b24] mr-[14px]">349</span>
        <span>results</span>
      </div>
      <Filters />
      <table className="mt-[43px] w-[2176px] table-fixed border-separate border-spacing-0 border-t-[3px] border-t-[#3b82e4] leading-[33.800px]">
        <colgroup>
          <col className="w-[157px]" />
          <col className="w-[900px]" />
          <col className="w-[561px]" />
          <col className="w-[140px]" />
          <col className="w-[125px]" />
          <col className="w-[93px]" />
          <col className="w-[101px]" />
          <col className="w-[99px]" />
        </colgroup>
        <thead>
          <tr className="h-[112px] bg-[#efefef]">
            {["Country", "Company Name", "Attorneys Name", "Attorneys", "Reviews", "Likes", "URL"].map((h) => (
              <th key={h} className={`${th} border-b-2 border-b-[#dfe3e7]`}>
                {h}
              </th>
            ))}
            <th className={`${th} border-b-2 border-b-[#dfe3e7]`}>
              E-
              <br />
              mail
            </th>
          </tr>
        </thead>
        <tbody>
          <ResultRow
            h="h-[396px]"
            country="Korea"
            company="Law Offices GURU"
            count="9"
            attorneys={names.map((n) => (
              <div key={n}>{n}</div>
            ))}
          />
          <ResultRow
            h="h-[125px]"
            country="Vietnam"
            company="GIAVIET"
            count="3"
            attorneys="Mr.TRAN VIET CUONG, Mr-LE TUNG, Mrs-LE XUAN PHI"
          />
        </tbody>
      </table>
    </div>
  );
}

export default function App() {
  return (
    <div className="w-[3444px] h-[2274px] bg-white overflow-hidden pl-[112px] pt-[75px]">
      <div className="w-[3220px] h-[2051px] bg-white rounded-[22px] overflow-hidden flex flex-col shadow-[0_50px_70px_rgba(0,0,0,0.38),0_0_2px_rgba(0,0,0,0.5)]">
        <Toolbar />
        <Tabs />
        <Header />
        <Hero />
        <Results />
      </div>
    </div>
  );
}
